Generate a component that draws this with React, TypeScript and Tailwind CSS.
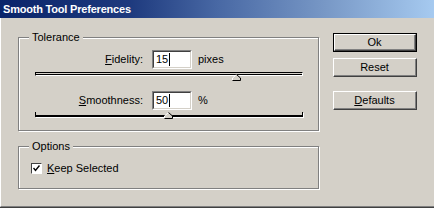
import React from "react";

const font = { fontFamily: '"Liberation Sans", Arial, sans-serif' };

function Thumb() {
  return (
    <svg width="9" height="7" viewBox="0 0 9 7" className="block">
      <polygon points="4.5,0.5 8.5,4 8.5,6.5 0.5,6.5 0.5,4" fill="#d4d0c8" />
      <polyline points="0.5,6 0.5,4 4.5,0.5" fill="none" stroke="#ffffff" strokeWidth="1" />
      <polyline points="4.5,0.5 8.5,4 8.5,6.5 0.5,6.5" fill="none" stroke="#000000" strokeWidth="1" />
    </svg>
  );
}

function Field({ value }: { value: string }) {
  return (
    <div className="w-[40px] h-[19px] border-t border-l border-[#808080] border-b border-r border-b-white border-r-white">
      <div className="w-full h-full border-t border-l border-[#404040] border-b border-r border-b-[#d4d0c8] border-r-[#d4d0c8] bg-white flex items-center pl-[2px] text-[11px] leading-[13px] text-black">
        <span>{value}</span>
        <span className="w-px h-[13px] bg-black ml-px" />
      </div>
    </div>
  );
}

function Button({ children, isDefault }: { children: React.ReactNode; isDefault?: boolean }) {
  return (
    <div className={"w-[84px] h-[19px] " + (isDefault ? "border border-black" : "")}>
      <div className="w-full h-full border-t border-l border-white border-b border-r border-b-[#404040] border-r-[#404040]">
        <div className="w-full h-full border-b border-r border-[#808080] flex items-center justify-center text-[11px] leading-[13px] text-black">
          {children}
        </div>
      </div>
    </div>
  );
}

export default function App() {
  return (
    <div className="w-[434px] h-[208px] flex flex-col bg-[#d4d0c8] border-b border-[#404040]" style={font}>
      <div className="h-[18px] bg-[linear-gradient(to_right,#0a246a_0%,#1e3a7e_30%,#4868a4_50%,#7898c6_75%,#a6caf0_100%)] flex items-center pl-[3px]">
        <span className="text-white font-bold text-[11px] leading-[13px] tracking-[-0.2px]">Smooth Tool Preferences</span>
      </div>
      <div className="flex-1 flex border-l border-white border-b border-b-[#808080] pl-[17px]">
        <div className="w-[301px] flex flex-col">
          {/* Tolerance */}
          <div className="relative mt-[19px] h-[94px] border border-[#808080] shadow-[1px_1px_0_#ffffff,inset_1px_1px_0_#ffffff] flex flex-col pl-[16px] pt-[12px] text-[11px] leading-[13px] text-black">
            <span className="absolute -top-[7px] left-[10px] px-[3px] bg-[#d4d0c8]">Tolerance</span>
            <div className="flex items-center h-[19px]">
              <span className="w-[108px] text-right"><span className="underline">F</span>idelity:</span>
              <div className="ml-[9px]"><Field value="15" /></div>
              <span className="ml-[6px]">pixes</span>
            </div>
            <div className="relative mt-[3px] w-[268px] h-[4px] border-t border-l border-black border-b border-r border-b-white border-r-white">
              <div className="mt-px h-px bg-black" />
              <div className="absolute left-[196px] top-[1px]"><Thumb /></div>
            </div>
            <div className="flex items-center h-[19px] mt-[15px]">
              <span className="w-[108px] text-right"><span className="underline">S</span>moothness:</span>
              <div className="ml-[9px]"><Field value="50" /></div>
              <span className="ml-[6px]">%</span>
            </div>
            <div className="relative mt-[2px] w-[268px] h-[5px] border-l border-r border-b-2 border-black shadow-[1px_1px_0_#ffffff]">
              <div className="absolute left-[128px] top-[0px]"><Thumb /></div>
            </div>
          </div>
          {/* Options */}
          <div className="relative mt-[15px] h-[43px] border border-[#808080] shadow-[1px_1px_0_#ffffff,inset_1px_1px_0_#ffffff] flex flex-col pl-[12px] pt-[15px] text-[11px] leading-[13px] text-black">
            <span className="absolute -top-[7px] left-[10px] px-[3px] bg-[#d4d0c8]">Options</span>
            <div className="flex items-center">
              <div className="w-[11px] h-[11px] border-t border-l border-[#404040] border-b border-r border-b-white border-r-white bg-white flex items-center justify-center">
                <svg width="7" height="7" viewBox="0 0 7 7" className="block">
                  <polyline points="0.5,3 2.5,5.5 6.5,0.5" fill="none" stroke="#000" strokeWidth="1.4" />
                </svg>
              </div>
              <span className="ml-[5px]"><span className="underline">K</span>eep Selected</span>
            </div>
          </div>
        </div>
        <div className="ml-[14px] pt-[15px] flex flex-col">
          <Button isDefault>Ok</Button>
          <div className="mt-[6px]"><Button>Reset</Button></div>
          <div className="mt-[14px]"><Button><span><span className="underline">D</span>efaults</span></Button></div>
        </div>
      </div>
    </div>
  );
}
